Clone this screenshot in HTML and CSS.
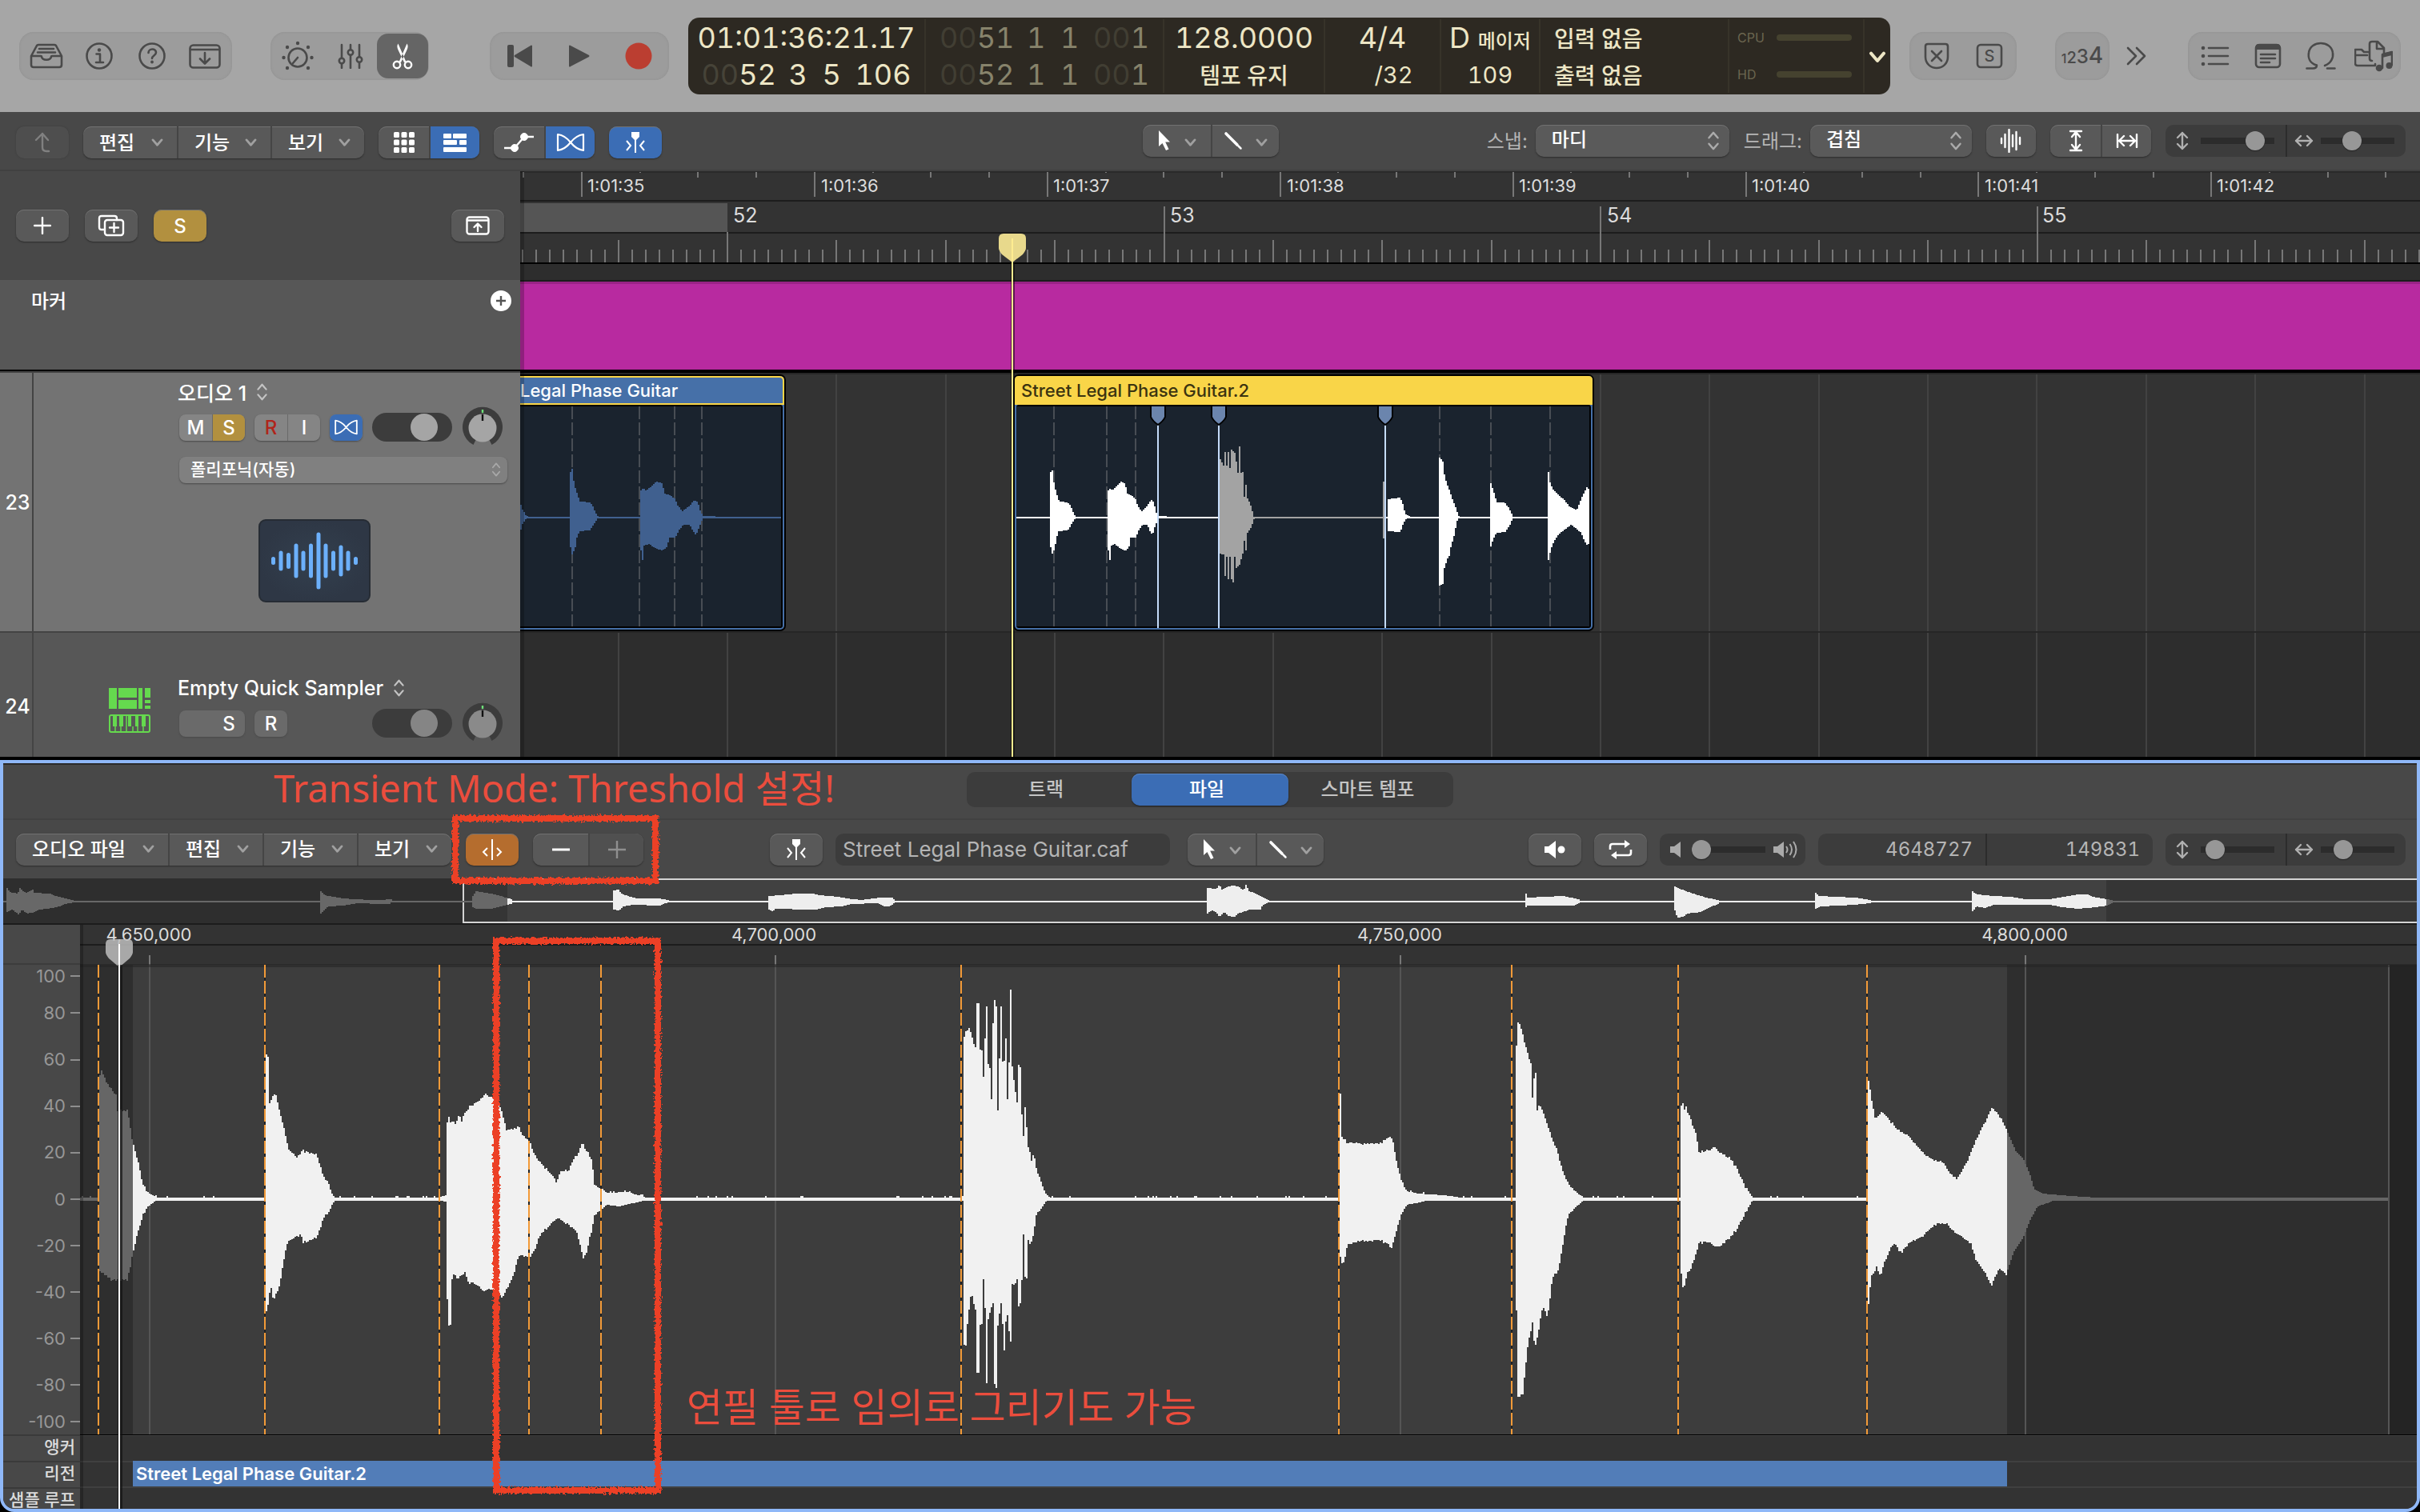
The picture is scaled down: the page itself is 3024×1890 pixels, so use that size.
FILE: index.html
```html
<!DOCTYPE html>
<html lang="ko">
<head>
<meta charset="utf-8">
<title>오디오 편집기</title>
<link rel="stylesheet" href="styles.css">
</head>
<body>
<svg class="defs" width="0" height="0" aria-hidden="true">
  <symbol id="chev" viewBox="0 0 16 12"><path d="M2 2l6 7 6-7" fill="none" stroke="currentColor" stroke-width="3" stroke-linecap="round" stroke-linejoin="round"/></symbol>
  <symbol id="updown" viewBox="0 0 16 26"><path d="M2 9l6-7 6 7M2 17l6 7 6-7" fill="none" stroke="currentColor" stroke-width="2.6" stroke-linecap="round" stroke-linejoin="round"/></symbol>
  <symbol id="pointer" viewBox="0 0 18 28"><path d="M2 1v20l4.500-4 4.500 9 3.500-1.600-4.300-8.900H16z" fill="currentColor"/></symbol>
  <symbol id="pencil" viewBox="0 0 24 24"><path d="M3 3l14 14" stroke="currentColor" stroke-width="3.600" stroke-linecap="round"/><path d="M18.500 18.500l3 3" stroke="currentColor" stroke-width="2.500" stroke-linecap="round"/></symbol>
  <symbol id="flex" viewBox="0 0 36 24"><path d="M2 2c8 1 12 5 16 10s8 9 16 10V2c-8 1-12 5-16 10S10 21 2 22z" fill="none" stroke="currentColor" stroke-width="2.200" stroke-linejoin="round"/></symbol>
  <symbol id="catch" viewBox="0 0 26 28"><path d="M8 1h10v6l-4 4h-2L8 7z" fill="currentColor"/><path d="M13 8v19M2 12l5 6-5 6M24 12l-5 6 5 6" fill="none" stroke="currentColor" stroke-width="2"/></symbol>
  <symbol id="vert" viewBox="0 0 18 24"><path d="M9 2v20M3 8l6-6 6 6M3 16l6 6 6-6" fill="none" stroke="currentColor" stroke-width="2.400" stroke-linecap="round" stroke-linejoin="round"/></symbol>
  <symbol id="horz" viewBox="0 0 24 16"><path d="M2 8h20M8 2L2 8l6 6M16 2l6 6-6 6" fill="none" stroke="currentColor" stroke-width="2.400" stroke-linecap="round" stroke-linejoin="round"/></symbol>
  <symbol id="knob" viewBox="0 0 52 52"><path d="M14.500 48A25 25 0 1 1 37.500 48L34 41H18z" fill="#3c3c3c"/><circle cx="26" cy="27" r="17.500" fill="currentColor"/><path d="M26 4v4" stroke="#6fe07a" stroke-width="2.400"/><path d="M26 10v8" stroke="#111" stroke-width="2.400"/></symbol>
</svg>

<div class="app">
  <header class="topbar">
    <div class="pill">
      <button class="tool" aria-label="라이브러리"><svg width="42" height="32" viewBox="0 0 42 32"><path d="M2 16L9 3q1-1 2-1h20q1 0 2 1l7 13v11q0 3-3 3H5q-3 0-3-3zM2 16h12q1 0 1 1c1 5 11 5 12 0q0-1 1-1h12M12 7h18M10 11.500h22" class="st"/></svg></button>
      <button class="tool" aria-label="정보"><svg width="34" height="34" viewBox="0 0 34 34"><circle cx="17" cy="17" r="15.500" class="st"/><circle cx="17" cy="9.500" r="2.200" class="fl"/><path d="M13.500 14.500H18V25M13 25h9" class="st"/></svg></button>
      <button class="tool" aria-label="도움말"><svg width="34" height="34" viewBox="0 0 34 34"><circle cx="17" cy="17" r="15.500" class="st"/><path d="M12.500 13c0-6 9.500-6 9.500-.500 0 4-5 4-5 7.500" class="st"/><circle cx="17" cy="24.500" r="1.900" class="fl"/></svg></button>
      <button class="tool" aria-label="도구 막대"><svg width="40" height="31" viewBox="0 0 40 31"><rect x="1.500" y="1.500" width="37" height="28" rx="4" class="st"/><path d="M2 7h36M20 11v13M14 18.500l6 6 6-6" class="st"/></svg></button>
    </div>
    <div class="pill pill-b">
      <button class="tool" aria-label="스마트 컨트롤"><svg width="40" height="38" viewBox="0 0 40 38"><circle cx="20" cy="21" r="11.500" class="st"/><path d="M20 21l-6 7" class="st"/><g class="fl"><circle cx="20" cy="3" r="2.200"/><circle cx="7" cy="8" r="2.200"/><circle cx="33" cy="8" r="2.200"/><circle cx="2.500" cy="21" r="2.200"/><circle cx="37.500" cy="21" r="2.200"/><circle cx="7" cy="34" r="2.200"/><circle cx="33" cy="34" r="2.200"/></g></svg></button>
      <button class="tool" aria-label="믹서"><svg width="32" height="32" viewBox="0 0 32 32"><path d="M5 2v17M5 26v5M16 2v6M16 15v16M27 2v15M27 24v7" class="st"/><circle cx="5" cy="22" r="3.200" class="st"/><circle cx="16" cy="11.500" r="3.200" class="st"/><circle cx="27" cy="20.500" r="3.200" class="st"/></svg></button>
      <button class="tool tool-on" aria-label="편집기"><svg width="26" height="34" viewBox="0 0 26 34"><g fill="none" stroke="#fff" stroke-width="2.400"><circle cx="6" cy="28" r="4.200"/><circle cx="20" cy="28" r="4.200"/></g><path d="M8.500 24.500L18.500 1.500c2 3 1 6-.500 9L11 25zM17.500 24.500L7.500 1.500c-2 3-1 6 .500 9L15 25z" fill="#fff"/></svg></button>
    </div>
    <div class="pill pill-c">
      <button class="tool" aria-label="처음으로"><svg width="32" height="28" viewBox="0 0 32 28"><rect x="0" y="0" width="8" height="28" rx="2" class="fl"/><path d="M31 1v26q-1 1-2 0L9 15q-1-1 0-2L29 1q1-1 2 0z" class="fl"/></svg></button>
      <button class="tool" aria-label="재생"><svg width="26" height="28" viewBox="0 0 26 28"><path d="M0 1q1-1 2 0l23 12q1 1 0 2L2 27q-1 1-2 0z" class="fl"/></svg></button>
      <button class="tool" aria-label="녹음"><svg width="34" height="34"><circle cx="17" cy="17" r="16.500" fill="#bb3e31"/></svg></button>
    </div>

    <section class="lcd" aria-label="디스플레이">
      <div class="lcd-cell pos"><b>01:01:36:21.17</b><b class="beats"><span><i>00</i>52</span><span>3</span><span>5</span><span>106</span></b></div>
      <div class="lcd-cell pos dim"><b class="beats"><span><i>00</i>51</span><span>1</span><span>1</span><span><i>00</i>1</span></b><b class="beats"><span><i>00</i>52</span><span>1</span><span>1</span><span><i>00</i>1</span></b></div>
      <div class="lcd-cell"><b>128.0000</b><b class="ko">템포 유지</b></div>
      <div class="lcd-cell"><b>4/4</b><b class="sub div">/32</b></div>
      <div class="lcd-cell"><b>D <small>메이저</small></b><b class="sub">109</b></div>
      <div class="lcd-cell io"><b class="ko">입력 없음</b><b class="ko">출력 없음</b></div>
      <div class="lcd-cell load"><span>CPU<i></i></span><span>HD<i></i></span></div>
      <button class="lcd-more" aria-label="디스플레이 모드"><svg width="22" height="16"><use href="#chev"/></svg></button>
    </section>

    <div class="pill">
      <button class="tool" aria-label="대치"><svg width="32" height="34" viewBox="0 0 32 34"><path d="M5 2h22q3 0 3 3v13c0 9-7 14-14 14S2 27 2 18V5q0-3 3-3zM10 11l12 12M22 11L10 23" class="st"/></svg></button>
      <button class="tool" aria-label="솔로"><svg width="34" height="32" viewBox="0 0 34 32"><rect x="2" y="2" width="30" height="28" rx="4" class="st"/><text x="17" y="23" text-anchor="middle" class="ic-s">S</text></svg></button>
    </div>
    <button class="pill count" aria-label="카운트 인"><span class="c1">1</span><span class="c2">2</span><span class="c3">3</span><span class="c4">4</span></button>
    <button class="more" aria-label="더 보기"><svg width="26" height="24" viewBox="0 0 26 24"><path d="M2 2l10 10L2 22M13 2l10 10-10 10" class="st"/></svg></button>
    <div class="pill">
      <button class="tool" aria-label="목록"><svg width="36" height="26" viewBox="0 0 36 26"><path d="M10 3h24M10 13h24M10 23h24" class="st"/><g class="fl"><circle cx="3" cy="3" r="2.300"/><circle cx="3" cy="13" r="2.300"/><circle cx="3" cy="23" r="2.300"/></g></svg></button>
      <button class="tool" aria-label="메모장"><svg width="34" height="32" viewBox="0 0 34 32"><rect x="2" y="2" width="30" height="28" rx="4" class="st"/><path d="M2 8V4q0-3 3-3h24q3 0 3 3v4z" class="fl"/><path d="M8 14h18M8 19h18M8 24h11" class="st"/></svg></button>
      <button class="tool" aria-label="루프 브라우저"><svg width="38" height="36" viewBox="0 0 38 36"><path d="M1.500 33.500H9q5 0 5-4C5 27 3 20 4 14 6-2 32-2 34 14c1 6-2 13-10 16M27 33.500h9.500" class="st"/></svg></button>
      <button class="tool" aria-label="미디어 브라우저"><svg width="48" height="40" viewBox="0 0 48 40"><path d="M26 30v2H4q-3 0-3-3V12h8l3 3h5M1 19h15M22 26q-3 0-3-3V5q0-3 3-3h7l8 8v6M28 2v9h8" class="st"/><path d="M35 35V18l12-3v16" class="st"/><path d="M35 17l12-3v5l-12 3z" class="fl"/><circle cx="31" cy="35" r="4.300" class="fl"/><circle cx="43.500" cy="32" r="4" class="fl"/></svg></button>
    </div>
  </header>

  <nav class="toolbar main-bar">
    <div class="left">
      <button class="btn faint" aria-label="뒤로"><svg width="24" height="26" viewBox="0 0 24 26"><path d="M12 2v17q0 5 5 5h3M4 10l8-8 7 8" class="ln"/></svg></button>
      <div class="seg menus">
        <button>편집<svg width="15" height="11"><use href="#chev"/></svg></button><button>기능<svg width="15" height="11"><use href="#chev"/></svg></button><button>보기<svg width="15" height="11"><use href="#chev"/></svg></button>
      </div>
      <div class="seg">
        <button aria-label="격자"><svg width="26" height="26" viewBox="0 0 26 26" fill="#fff"><rect width="7" height="7" rx="1.500"/><rect x="9.500" width="7" height="7" rx="1.500"/><rect x="19" width="7" height="7" rx="1.500"/><rect y="9.500" width="7" height="7" rx="1.500"/><rect x="9.500" y="9.500" width="7" height="7" rx="1.500"/><rect x="19" y="9.500" width="7" height="7" rx="1.500"/><rect y="19" width="7" height="7" rx="1.500"/><rect x="9.500" y="19" width="7" height="7" rx="1.500"/><rect x="19" y="19" width="7" height="7" rx="1.500"/></svg></button><button class="blue" aria-label="트랙 보기"><svg width="30" height="24" viewBox="0 0 30 24" fill="#fff"><rect y="1" width="10" height="6" rx="1"/><rect x="12" y="1" width="17" height="6" rx="1"/><rect y="9" width="17" height="6" rx="1"/><rect x="20" y="9" width="9" height="6" rx="1"/><rect y="18" width="29" height="6" rx="1"/></svg></button>
      </div>
      <div class="seg">
        <button aria-label="오토메이션"><svg width="38" height="26" viewBox="0 0 38 26" fill="#fff" stroke="#fff"><circle cx="13" cy="20" r="4.500"/><circle cx="25" cy="6" r="4.500"/><path d="M0 20h10M13 20L25 6h12" stroke-width="2.400" fill="none"/></svg></button><button class="blue" aria-label="Flex"><svg width="36" height="24"><use href="#flex"/></svg></button>
      </div>
      <button class="btn blue" aria-label="따라가기"><svg width="26" height="28"><use href="#catch"/></svg></button>
    </div>
    <div class="seg tools">
      <button aria-label="포인터 도구"><svg width="18" height="28"><use href="#pointer"/></svg><svg class="cv" width="15" height="11"><use href="#chev"/></svg></button><button aria-label="연필 도구"><svg width="24" height="24"><use href="#pencil"/></svg><svg class="cv" width="15" height="11"><use href="#chev"/></svg></button>
    </div>
    <div class="right">
      <label for="snap">스냅:</label>
      <div class="pick snap"><select id="snap"><option>마디</option></select><svg width="16" height="24"><use href="#updown"/></svg></div>
      <label for="drag">드래그:</label>
      <div class="pick drag"><select id="drag"><option>겹침</option></select><svg width="16" height="24"><use href="#updown"/></svg></div>
      <button class="btn wavebtn" aria-label="파형 확대"><svg width="28" height="30" viewBox="0 0 28 30"><path d="M2 12v6M6.500 7v16M11.500 1v28M16 8v14M20.500 4v22M25 11v8" class="ln"/></svg></button>
      <div class="seg"><button aria-label="세로 맞춤"><svg width="18" height="28" viewBox="0 0 18 28"><path d="M2 2h14M2 26h14M9 4v20M4 9l5-6 5 6M4 19l5 6 5-6" class="ln"/></svg></button><button aria-label="가로 맞춤"><svg width="28" height="18" viewBox="0 0 28 18"><path d="M2 1v16M26 1v16M4 9h20M10 3L4 9l6 6M18 3l6 6-6 6" class="ln"/></svg></button></div>
      <div class="zoom"><label><svg width="18" height="24"><use href="#vert"/></svg><input type="range" aria-label="세로 확대" value="82"></label><label><svg width="24" height="16"><use href="#horz"/></svg><input type="range" aria-label="가로 확대" value="40"></label></div>
    </div>
  </nav>

  <main class="arrange">
    <section class="heads">
      <div class="head-tools">
        <button class="btn" aria-label="트랙 추가"><svg width="22" height="22" viewBox="0 0 22 22"><path d="M11 1v20M1 11h20" class="ln"/></svg></button>
        <button class="btn" aria-label="트랙 복제"><svg width="34" height="28" viewBox="0 0 34 28"><path d="M8 19H5q-3 0-3-3V5q0-3 3-3h16q3 0 3 3v2" class="ln"/><rect x="9" y="7" width="23" height="19" rx="3" class="ln"/><path d="M20.500 11v11M15 16.500h11" class="ln"/></svg></button>
        <button class="btn gold">S</button>
        <button class="btn last" aria-label="헤더 설정"><svg width="30" height="24" viewBox="0 0 30 24"><rect x="1.500" y="1.500" width="27" height="21" rx="3" class="ln"/><path d="M2 5.500h26M15 10v9M10.500 14l4.500-4.500 4.500 4.500" class="ln"/></svg></button>
      </div>
      <div class="marker-head"><span>마커</span><button class="plus" aria-label="마커 추가"><svg width="26" height="26"><circle cx="13" cy="13" r="13" fill="#fff"/><path d="M13 7v12M7 13h12" stroke="#555" stroke-width="2.400"/></svg></button></div>
      <article class="track track-a">
        <div class="num">23</div>
        <div class="strip">
          <h2>오디오 1<svg width="15" height="22"><use href="#updown"/></svg></h2>
          <div class="ctl">
            <div class="mini"><button>M</button><button class="gold">S</button></div>
            <div class="mini"><button class="rec">R</button><button>I</button></div>
            <div class="mini"><button class="blue" aria-label="Flex"><svg width="31" height="20"><use href="#flex"/></svg></button></div>
            <input class="vol" type="range" aria-label="볼륨" value="73">
            <svg class="pan" width="52" height="52"><use href="#knob"/></svg>
          </div>
          <div class="pick algo"><select aria-label="Flex 모드"><option>폴리포닉(자동)</option></select><svg width="12" height="18"><use href="#updown"/></svg></div>
          <svg class="thumb" width="140" height="104" viewBox="0 0 140 104"><defs><radialGradient id="tg"><stop offset="0" stop-color="#33404f"/><stop offset="1" stop-color="#2e3745"/></radialGradient></defs><rect x="1" y="1" width="138" height="102" rx="8" fill="url(#tg)" stroke="#262c34" stroke-width="2"/><path d="M18.500 49.500v5M28 42v20M37.500 44.500v15M47 33v38M56 42v20M65.500 33v38M75 19v66M84 33v38M93.500 42v20M103 35v34M112 42v20M121.500 49.500v5" stroke="#6cb0fb" stroke-width="5" stroke-linecap="round"/></svg>
        </div>
      </article>
      <article class="track track-b">
        <div class="num">24</div>
        <svg class="sampler" width="52" height="56" viewBox="0 0 52 56" fill="#65d94e"><rect width="10" height="26"/><rect x="12" width="23" height="12"/><rect x="12" y="15" width="23" height="11"/><rect x="37" width="5" height="26"/><rect x="45" width="7" height="12"/><rect x="45" y="15" width="7" height="4"/><rect x="45" y="22" width="7" height="4"/><rect x="1" y="34" width="50" height="21" rx="2" fill="none" stroke="#65d94e" stroke-width="2"/><path d="M5 34h5v14H5zM13 34h5v14h-5zM24 34h4v14h-4zM33 34h4v14h-4zM41 34h5v14h-5z"/><path d="M8 48v7M15 48v7M22 34v21M30 48v7M36 48v7M43 48v7" stroke="#65d94e" stroke-width="1.500"/></svg>
        <div class="strip">
          <h2>Empty Quick Sampler<svg width="15" height="22"><use href="#updown"/></svg></h2>
          <div class="ctl">
            <div class="mini"><button aria-label="음소거"></button><button>S</button></div>
            <div class="mini"><button>R</button></div>
            <input class="vol" type="range" aria-label="볼륨" value="73">
            <svg class="pan" width="52" height="52"><use href="#knob"/></svg>
          </div>
        </div>
      </article>
    </section>

    <svg class="timeline" role="img" aria-label="타임라인">
      <g transform="translate(-650 -214)">
        <rect x="650" y="214" width="4000" height="116" fill="#333"/>
        <rect x="650" y="254" width="259" height="36" fill="#555"/>
        <rect x="650" y="214" width="4000" height="2" fill="#2a2a2a"/>
        <rect x="650" y="250" width="4000" height="2" fill="#1c1c1c"/>
        <rect x="650" y="290" width="4000" height="2" fill="#1c1c1c"/>
        <rect x="650" y="328" width="4000" height="2" fill="#000"/>
        <rect x="650" y="330" width="4000" height="20" fill="#2d2d2d"/>
        <g id="ruler" stroke="#777" stroke-width="2" shape-rendering="crispEdges"></g>
        <g class="rl"><text x="734" y="240">1:01:35</text><text x="1026" y="240">1:01:36</text><text x="1316" y="240">1:01:37</text><text x="1608" y="240">1:01:38</text><text x="1898" y="240">1:01:39</text><text x="2189" y="240">1:01:40</text><text x="2480" y="240">1:01:41</text><text x="2770" y="240">1:01:42</text></g>
        <g class="rb"><text x="916" y="278">52</text><text x="1462" y="278">53</text><text x="2008" y="278">54</text><text x="2552" y="278">55</text></g>
        <rect x="650" y="350" width="4000" height="2" fill="#1c1c1c"/>
        <rect x="650" y="352" width="4000" height="110" fill="#b82aa0"/>
        <rect x="650" y="352" width="4000" height="3" fill="#9a2386"/>
        <rect x="650" y="462" width="4000" height="4" fill="#000"/>
        <rect x="650" y="466" width="4000" height="324" fill="#333"/>
        <rect x="650" y="790" width="4000" height="156" fill="#2d2d2d"/>
        <g id="grid" stroke="#424242" stroke-width="2" shape-rendering="crispEdges"></g>
        <rect x="650" y="466" width="4000" height="2" fill="#262626"/>
        <rect x="650" y="789" width="4000" height="2" fill="#262626"/>

        <rect x="600" y="468" width="382" height="321" rx="7" fill="#000"/>
        <rect x="600" y="470" width="380" height="317" rx="5" fill="#4670a8"/>
        <rect x="600" y="506" width="378" height="279" rx="3" fill="#000"/>
        <rect x="600" y="508" width="376" height="275" fill="#1a232e"/>
        <path d="M640 471h334q5 0 5 5v29H640" fill="#4670a8" stroke="#f9d548" stroke-width="2"/>
        <text class="rn" x="650" y="496" fill="#fff">Legal Phase Guitar</text>
        <path class="cut" d="M715 508v275M799 508v275M843 508v275M877 508v275"/>
        <path id="wave-a" fill="#40608f"/>

        <rect x="1266" y="468" width="726" height="321" rx="7" fill="#000"/>
        <rect x="1268" y="470" width="722" height="317" rx="5" fill="#4670a8"/>
        <rect x="1270" y="506" width="718" height="279" rx="3" fill="#000"/>
        <rect x="1270" y="508" width="716" height="275" fill="#1a232e"/>
        <path d="M1268 506v-31q0-5 5-5h712q5 0 5 5v31z" fill="#f9d548"/>
        <text class="rn" x="1276" y="496" fill="#3b3310">Street Legal Phase Guitar.2</text>
        <path class="cut" d="M1317 508v275M1383 508v275M1419 508v275M1799 508v275M1863 508v275M1937 508v275"/>
        <path id="wave-b" fill="#fff"/>
        <path id="wave-m" fill="#a3a3a3"/>
        <path d="M1447 528v257M1523 528v257M1731 528v257" stroke="#c5dcfa" stroke-width="2"/>
        <g fill="#6b85ad" stroke="#000" stroke-width="2"><path d="M1438 507h18v14q-2 5-9 10-7-5-9-10z"/><path d="M1514 507h18v14q-2 5-9 10-7-5-9-10z"/><path d="M1722 507h18v14q-2 5-9 10-7-5-9-10z"/></g>

        <rect x="1263" y="320" width="5" height="626" fill="#000" opacity=".5"/>
        <path d="M1248 298q0-6 6-6h22q6 0 6 6v12q0 3-4 8l-13 10-13-10q-4-5-4-8z" fill="#e8d98c"/>
        <rect x="1264" y="298" width="2" height="648" fill="#ffec90"/>
        <rect x="650" y="214" width="5" height="732" fill="#000" opacity=".22"/>
      </g>
    </svg>
  </main>

  <section class="editor">
    <div class="tabs-row">
      <div class="tabs" role="tablist"><button role="tab">트랙</button><button role="tab" class="blue" aria-selected="true">파일</button><button role="tab">스마트 템포</button></div>
    </div>
    <nav class="toolbar ed-bar">
      <div class="seg menus">
        <button class="wide">오디오 파일<svg width="15" height="11"><use href="#chev"/></svg></button><button>편집<svg width="15" height="11"><use href="#chev"/></svg></button><button>기능<svg width="15" height="11"><use href="#chev"/></svg></button><button>보기<svg width="15" height="11"><use href="#chev"/></svg></button>
      </div>
      <button class="btn orange" aria-label="트랜지언트 편집 모드"><svg width="26" height="28" viewBox="0 0 26 28"><path d="M13 1v26M7 12l-5 5 5 5M19 12l5 5-5 5" fill="none" stroke="#fff" stroke-width="2"/></svg></button>
      <div class="seg step"><button aria-label="트랜지언트 줄이기"><svg width="22" height="22"><path d="M0 11h22" stroke="#fff" stroke-width="3"/></svg></button><button class="off" aria-label="트랜지언트 늘리기"><svg width="22" height="22"><path d="M0 11h22M11 0v22" stroke="#8f8f8f" stroke-width="2.400"/></svg></button></div>
      <button class="btn flexbtn" aria-label="따라가기"><svg width="26" height="28"><use href="#catch"/></svg></button>
      <input class="field file" type="text" aria-label="파일 이름" value="Street Legal Phase Guitar.caf" readonly>
      <div class="seg tools2">
        <button aria-label="포인터 도구"><svg width="18" height="28"><use href="#pointer"/></svg><svg class="cv" width="15" height="11"><use href="#chev"/></svg></button><button aria-label="연필 도구"><svg width="24" height="24"><use href="#pencil"/></svg><svg class="cv" width="15" height="11"><use href="#chev"/></svg></button>
      </div>
      <div class="right">
        <button class="btn" aria-label="미리 듣기"><svg width="28" height="24" viewBox="0 0 28 24" fill="#fff"><path d="M1 8h5l9-7v22l-9-7H1z"/><circle cx="22" cy="12" r="4.500"/></svg></button>
        <button class="btn" aria-label="순환"><svg width="30" height="24" viewBox="0 0 30 24"><path d="M2 12V8q0-3 3-3h17M28 12v4q0 3-3 3H8" fill="none" stroke="#fff" stroke-width="2.600"/><path d="M20 0l7 5-7 5zM10 14l-7 5 7 5z" fill="#fff"/></svg></button>
        <div class="zoom volume"><svg width="16" height="20" viewBox="0 0 16 20" fill="#aaa"><path d="M0 6h5l8-6v20l-8-6H0z"/></svg><input type="range" aria-label="미리 듣기 음량" value="0"><svg width="32" height="22" viewBox="0 0 32 22"><path d="M0 7h5l8-6v20l-8-6H0z" fill="#aaa"/><path d="M16 7q3 4 0 8M20.500 4q5 7 0 14M25 1q7 10 0 20" fill="none" stroke="#aaa" stroke-width="2"/></svg></div>
        <div class="nums"><input type="text" aria-label="시작 위치" value="4648727"><input type="text" aria-label="길이" value="149831"></div>
        <div class="zoom"><label><svg width="18" height="24"><use href="#vert"/></svg><input type="range" aria-label="세로 확대" value="9"></label><label><svg width="24" height="16"><use href="#horz"/></svg><input type="range" aria-label="가로 확대" value="23"></label></div>
      </div>
    </nav>
    <svg class="overview" role="img" aria-label="파일 개요">
      <g transform="translate(-4 -1098)">
        <rect x="4" y="1098" width="4000" height="56" fill="#2e2e2e"/>
        <rect x="578" y="1098" width="4000" height="56" fill="#353535"/>
        <rect x="634" y="1098" width="1998" height="56" fill="#414141"/>
        <rect x="579" y="1099" width="4000" height="54" fill="none" stroke="#d4d4d4" stroke-width="2"/>
        <path id="ov-g" fill="#686868"/><path id="ov-w" fill="#eee"/>
      </g>
    </svg>
    <div class="wave-area">
      <div class="axis">
        <div class="axis-top"></div>
        <svg class="scale" width="96" height="587"><g transform="translate(-4 -1206)"><path d="M88 1220h12M88 1266h12M88 1325h12M88 1383h12M88 1441h12M88 1499h12M88 1557h12M88 1615h12M88 1673h12M88 1731h12M88 1777h12" stroke="#8e8e8e" stroke-width="2"/><g class="ax"><text x="82" y="1228">100</text><text x="82" y="1274">80</text><text x="82" y="1332">60</text><text x="82" y="1390">40</text><text x="82" y="1448">20</text><text x="82" y="1507">0</text><text x="82" y="1565">-20</text><text x="82" y="1623">-40</text><text x="82" y="1681">-60</text><text x="82" y="1739">-80</text><text x="82" y="1785">-100</text></g></g></svg>
        <div class="lane">앵커</div><div class="lane">리전</div><div class="lane">샘플 루프</div>
      </div>
      <svg class="wave" role="img" aria-label="파형">
        <g transform="translate(-100 -1156)">
          <rect x="100" y="1156" width="4000" height="734" fill="#333"/>
          <rect x="100" y="1180" width="4000" height="2" fill="#1c1c1c"/>
          <rect x="100" y="1206" width="4000" height="587" fill="#242424"/>
          <rect x="100" y="1206" width="2884" height="587" fill="#2e2e2e"/>
          <rect x="166" y="1206" width="2342" height="587" fill="#3d3d3d"/>
          <path d="M187 1206v587M969 1206v587M1750 1206v587M2531 1206v587M2985 1206v587" stroke="#555" stroke-width="2"/>
          <path d="M187 1194v12M969 1194v12M1750 1194v12M2531 1194v12" stroke="#777" stroke-width="2"/>
          <rect x="100" y="1205" width="4000" height="4" fill="#222" opacity=".5"/>
          <g class="rl mid"><text x="186" y="1176">4,650,000</text><text x="967" y="1176">4,700,000</text><text x="1749" y="1176">4,750,000</text><text x="2530" y="1176">4,800,000</text></g>
          <path id="ed-g" fill="#666"/><path id="ed-w" fill="#f1f1f1"/>
          <path d="M123 1206v587M331 1206v587M549 1206v587M661 1206v587M751 1206v587M1201 1206v587M1673 1206v587M1889 1206v587M2097 1206v587M2333 1206v587" stroke="#222" stroke-width="2"/>
          <path d="M123 1206v587M331 1206v587M549 1206v587M661 1206v587M751 1206v587M1201 1206v587M1673 1206v587M1889 1206v587M2097 1206v587M2333 1206v587" stroke="#f29a38" stroke-width="2" stroke-dasharray="16 4"/>
          <rect x="100" y="1793" width="4000" height="1" fill="#000"/><rect x="100" y="1794" width="4000" height="1" fill="#404040"/>
          <path d="M100 1827h4000M100 1859h4000" stroke="#404040" stroke-width="2"/>
          <rect x="166" y="1826" width="2342" height="32" fill="#527db8"/>
          <text class="rn bold" x="170" y="1850" fill="#fff">Street Legal Phase Guitar.2</text>
          <path d="M132 1180q0-6 6-6h22q6 0 6 6v10q0 3-4 8l-13 11-13-11q-4-5-4-8z" fill="#bdbdbd" opacity=".85"/>
          <rect x="147" y="1206" width="6" height="684" fill="#111" opacity=".7"/>
          <rect x="148" y="1180" width="2" height="710" fill="#fff"/>
          <rect x="100" y="1156" width="4" height="734" fill="#000" opacity=".25"/>
        </g>
      </svg>
    </div>
    <p class="note note-a">Transient Mode: Threshold 설정!</p>
    <p class="note note-b">연필 툴로 임의로 그리기도 가능</p>
    <svg class="marks" width="300" height="880" aria-hidden="true">
      <defs><filter id="rough" x="-5%" y="-5%" width="110%" height="110%"><feTurbulence type="fractalNoise" baseFrequency=".35" numOctaves="2" result="n"/><feDisplacementMap in="SourceGraphic" in2="n" scale="7"/></filter></defs>
      <g fill="none" stroke="#ec3f27" stroke-width="8" filter="url(#rough)" transform="translate(-562 -1011)"><rect x="571" y="1024" width="250" height="78"/><rect x="622" y="1177" width="202" height="687"/></g>
    </svg>
  </section>
</div>
<script src="waves.js"></script>
</body>
</html>
```
FILE: styles.css
```css
* { box-sizing: border-box; }
body {
  margin: 0;
  background: #000;
  color: #fff;
  font-family: Inter, "Noto Sans CJK KR", sans-serif;
  font-size: 24px;
}
button, input, select { font: inherit; color: inherit; margin: 0; border: 0; padding: 0; background: none; }
svg { display: block; flex: none; }
.defs { position: absolute; }
.app { display: flex; flex-direction: column; min-height: 100vh; overflow: hidden; }

.topbar {
  display: flex;
  align-items: center;
  height: 140px;
  padding: 0 24px;
  background: #a6a6a6;
  color: #4a4a4a;
}
.st { fill: none; stroke: currentColor; stroke-width: 2.6; stroke-linecap: round; stroke-linejoin: round; }
.fl { fill: currentColor; }
.ln { fill: none; stroke: currentColor; stroke-width: 2.4; stroke-linecap: round; stroke-linejoin: round; }
.ic-s { font-size: 20px; font-weight: 500; fill: currentColor; }
.pill {
  display: flex;
  align-items: center;
  height: 60px;
  padding: 0 1px;
  border-radius: 18px;
  background: #9c9c9c;
  box-shadow: inset 0 0 3px #8e8e8e;
}
.tool { display: flex; align-items: center; justify-content: center; width: 66px; height: 56px; }
.tool-on { width: 64px; border-radius: 14px; background: #656565; }
.pill-b { margin-left: 48px; }
.pill-c { margin-left: 76px; }
.pill-c .tool { width: 74px; }
.count { margin-left: 48px; width: 68px; justify-content: center; align-items: baseline; line-height: 58px; font-weight: 500; }
.c1 { font-size: 16px; }
.c2 { font-size: 20px; }
.c3 { font-size: 24px; }
.c4 { font-size: 28px; }
.more { width: 98px; padding-left: 21px; }

.lcd {
  flex: 1;
  display: grid;
  grid-template-columns: 297fr 298fr 201fr 145fr 124fr 236fr 169fr 32fr;
  height: 96px;
  margin: 0 24px;
  padding: 2px 0;
  border-radius: 14px;
  background: #2d2922;
  color: #ede6c5;
}
.lcd-cell { display: grid; grid-template-rows: 46px 46px; justify-items: center; align-items: center; white-space: nowrap; border-right: 2px solid #373329; }
.lcd b { font-weight: 400; font-size: 36px; font-variant-numeric: tabular-nums; }
.lcd .ko { font-size: 28px; font-weight: 500; }
.lcd .sub { font-size: 29px; }
.lcd .div { padding-left: 28px; }
.lcd small { font-size: 24px; font-weight: 500; }
.lcd i { font-style: normal; color: #464338; }
.beats { display: grid; grid-template-columns: 103px 42px 43px 74px; width: 262px; }
.beats span:last-child { text-align: right; }
.beats span:nth-child(2), .beats span:nth-child(3) { padding-left: 6px; }
.lcd .dim { color: #87836b; }
.lcd .dim i { color: #413e33; }
.lcd .io { justify-items: start; padding-left: 17px; }
.load { color: #6b6650; font-size: 16px; justify-items: stretch; padding: 0 14px 0 10px; }
.load span { display: flex; justify-content: space-between; align-items: center; }
.load i { width: 94px; height: 8px; border-radius: 4px; background: #45422f; }
.lcd-more { display: flex; align-items: center; justify-content: center; padding-top: 4px; }

.toolbar {
  display: flex;
  align-items: center;
  gap: 18px;
  height: 74px;
  padding: 0 18px 0 20px;
  background: #484848;
  border-bottom: 2px solid #414141;
}
.main-bar { display: grid; grid-template-columns: 1fr auto 1fr; }
.left { display: flex; align-items: center; gap: 18px; padding-top: 4px; }
.btn, .seg {
  display: flex;
  height: 40px;
  border-radius: 10px;
  background: #595959;
  box-shadow: inset 0 1px 0 #727272, 0 1px 2px #2c2c2c;
}
.btn { align-items: center; justify-content: center; width: 66px; flex: none; font-weight: 500; }
.seg { overflow: hidden; flex: none; }
.seg button { display: flex; align-items: center; justify-content: center; width: 63px; font-weight: 500; }
.seg button + button { border-left: 2px solid #454545; }
.seg .blue, .blue { background: #3b6db5; }
.gold { background: #b2903f; }
.orange { background: #b56d2e; }
.faint { background: #4e4e4e; color: #808080; box-shadow: 0 0 2px #3a3a3a; }
.menus button { width: 117px; justify-content: space-between; padding: 0 17px 4px 20px; white-space: nowrap; }
.ed-bar .menus button { width: 118px; }
.menus svg, .cv { color: #a0a0a0; margin-top: 4px; }
.ed-bar .menus .wide { width: 190px; }
.tools button, .tools2 button { width: 85px; gap: 16px; }
.right { display: flex; align-items: center; justify-content: flex-end; gap: 18px; }
.right > label { color: #b5b5b5; padding-bottom: 4px; margin-right: -8px; }
.pick { position: relative; height: 40px; border-radius: 10px; background: #5a5a5a; box-shadow: inset 0 1px 0 #727272, 0 1px 2px #2c2c2c; }
.pick select { appearance: none; width: 100%; height: 100%; padding: 0 20px 4px; font-weight: 500; }
.pick svg { position: absolute; right: 12px; top: 8px; color: #ababab; pointer-events: none; }
.snap { width: 242px; }
.drag { width: 202px; }
.wavebtn { width: 62px; }
.zoom { display: flex; height: 40px; width: 300px; border-radius: 10px; background: #3c3c3c; color: #b0b0b0; }
.zoom label { display: flex; align-items: center; justify-content: space-between; width: 150px; padding: 0 14px 0 12px; }
.zoom label + label { border-left: 2px solid #2c2c2c; padding-left: 9px; }
input[type="range"] { appearance: none; width: 92px; height: 24px; background: linear-gradient(#2c2c2c, #2c2c2c) center / 100% 8px no-repeat; border-radius: 4px; }
input[type="range"]::-webkit-slider-thumb { appearance: none; width: 24px; height: 24px; border-radius: 50%; background: #979797; box-shadow: 0 1px 1px #222; }

.arrange { display: grid; grid-template-columns: 650px 1fr; border-bottom: 4px solid #000; }
.heads { background: #484848; }
.head-tools { display: flex; align-items: center; gap: 20px; height: 136px; padding: 0 20px; }
.head-tools .last { margin-left: auto; }
.marker-head { display: flex; justify-content: space-between; align-items: flex-start; height: 114px; padding: 7px 11px 0 39px; background: #575757; border-bottom: 2px solid #000; font-weight: 500; }
.plus { margin-top: 6px; }
.track { display: grid; grid-template-columns: 42px 1fr; }
.track-a { height: 327px; background: #737373; border-top: 2px solid #444; border-bottom: 2px solid #444; }
.track-b { height: 155px; background: #575757; grid-template-columns: 42px 146px 36px 1fr; }
.num { display: flex; align-items: center; justify-content: center; border-right: 2px solid #444; font-size: 25px; font-weight: 500; padding-left: 4px; }
.track-b .num { padding-top: 28px; }
.strip { padding: 6px 16px 0 182px; }
.track-b .sampler { grid-column: 2; justify-self: end; margin-top: 69px; }
.track-b .strip { grid-column: 4; padding-left: 0; padding-top: 51px; }
.track h2 { display: flex; align-items: center; gap: 12px; margin: 0 0 0 -2px; height: 36px; font-size: 25px; font-weight: 500; white-space: nowrap; }
.track h2 svg { color: #c4c4c4; }
.ctl { display: flex; align-items: center; gap: 12px; height: 52px; }
.mini { display: flex; height: 33px; border-radius: 8px; overflow: hidden; background: #858585; box-shadow: 0 1px 2px #4a4a4a; font-weight: 500; }
.track-b .mini { background: #6a6a6a; }
.mini button { display: flex; align-items: center; justify-content: center; width: 41px; }
.mini button + button { border-left: 1px solid #6a6a6a; }
.mini .rec { color: #b0251b; }
.ctl .vol { width: 100px; height: 36px; border-radius: 18px; background: #3c3c3c; margin-left: auto; }
.ctl .vol::-webkit-slider-thumb { width: 34px; height: 34px; background: #a5a5a5; box-shadow: none; }
.track-b .vol::-webkit-slider-thumb { background: #858585; }
.pan { color: #a5a5a5; margin: 0 5px 0 0; }
.track-b .pan { color: #8a8a8a; }
.algo { height: 33px; width: 410px; margin-top: 11px; background: #808080; box-shadow: 0 1px 2px #4a4a4a; border-radius: 8px; font-size: 21px; }
.algo select { padding: 0 14px 3px; }
.algo svg { top: 7px; right: 8px; color: #a8a8a8; }
.thumb { margin: 45px 0 0 99px; }
.timeline { width: 100%; height: 732px; overflow: hidden; }
.rl { font-size: 22px; fill: #dcdcdc; }
.rb { font-size: 25px; fill: #dcdcdc; }
.mid { text-anchor: middle; }
.rn { font-size: 22px; font-weight: 500; }
.bold { font-weight: 600; }
.cut { stroke: #484d54; stroke-width: 2; stroke-dasharray: 16 4; }

.editor { position: relative; flex: 1; display: flex; flex-direction: column; border: 4px solid #8fb8f8; border-radius: 0 0 18px 18px; overflow: hidden; background: #333; }
.tabs-row { display: flex; justify-content: center; align-items: center; height: 71px; padding-bottom: 6px; background: #484848; border-top: 2px solid #2b2b2b; border-bottom: 2px solid #414141; }
.tabs { display: flex; align-items: center; height: 44px; border-radius: 10px; background: #3c3c3c; color: #c4c4c4; font-weight: 500; }
.tabs button { width: 206px; height: 40px; padding: 0 8px 8px 0; border-radius: 10px; }
.tabs .blue { width: 196px; color: #fff; box-shadow: inset 0 1px 0 #5b87c6, 0 1px 2px #222; }
.ed-bar { height: 73px; padding: 0 14px 0 16px; border-bottom: 0; }
.step button { width: 69px; }
.step .off { background: #505050; }
.flexbtn { margin-left: 140px; }
.field { height: 40px; border-radius: 10px; background: #3c3c3c; color: #b5b5b5; font-size: 26px; }
.file { width: 418px; padding: 0 9px; margin-left: -2px; }
.ed-bar .tools2 { margin: 0 auto 0 4px; }
.ed-bar .right { gap: 16px; }
.volume { width: 182px; align-items: center; justify-content: space-between; padding: 0 8px 0 13px; }
.nums { display: flex; height: 40px; width: 418px; border-radius: 10px; background: #3c3c3c; color: #b5b5b5; font-size: 24px; font-variant-numeric: tabular-nums; }
.nums input { width: 209px; padding-right: 16px; text-align: right; }
.nums input + input { border-left: 2px solid #2c2c2c; }
.overview { width: 100%; height: 56px; }
.wave-area { display: grid; grid-template-columns: 96px 1fr; flex: 1; border-top: 2px solid #1c1c1c; }
.axis { background: #484848; }
.axis-top { height: 50px; border-bottom: 2px solid #3c3c3c; }
.ax { font-size: 22px; fill: #979797; text-anchor: end; }
.lane { height: 33px; line-height: 28px; padding-right: 6px; text-align: right; font-size: 21px; font-weight: 500; color: #dcdcdc; border-top: 2px solid #3a3a3a; white-space: nowrap; }
.lane:last-child { height: 27px; }
.wave { width: 100%; height: 100%; min-height: 730px; }
.note { position: absolute; margin: 0; color: #eb4d3d; font-family: "Noto Sans", "Noto Sans CJK KR", sans-serif; line-height: 60px; white-space: nowrap; }
.note-a { left: 338px; top: 1px; font-size: 47px; }
.note-b { left: 854px; top: 774px; font-size: 49px; }
.marks { position: absolute; left: 556px; top: 56px; pointer-events: none; }
```
FILE: waves.js
```js
// Each outline is a flat list: x, height, x, height, ...
function heightAt(list, x) {
  if (x < list[0] || x > list[list.length - 2]) return 0;
  for (let i = 2; i < list.length; i += 2) {
    if (x <= list[i]) {
      const t = (x - list[i - 2]) / (list[i] - list[i - 2] || 1);
      return list[i - 1] + (list[i + 1] - list[i - 1]) * t;
    }
  }
  return 0;
}
function outline(from, to, mid, base, hits, jitter) {
  let d = '';
  for (let x = from; x < to; x += 2) {
    let up = base, down = base;
    for (const [u, l] of hits) {
      up = Math.max(up, heightAt(u, x));
      down = Math.max(down, heightAt(l, x));
    }
    if (jitter) {
      const n = Math.abs(Math.sin(x * 12.9898) * 43758.5453) % 1;
      if (up > 12) up += (n - 0.5) * 3;
      else if (n > 0.9) up += 2;
      if (down > 12) down += (n - 0.5) * 3;
    }
    up = Math.round(up); down = Math.round(down);
    d += `M${x} ${mid - up}h2v${up + down}h-2z`;
  }
  return d;
}
function draw(id, ...parts) {
  document.getElementById(id).setAttribute('d', parts.join(''));
}
const fit = (list, from, to, k) => list.map((v, i) => i % 2 ? v : to + (v - from) * k);

const editor = [
  [[124,156,126,162,132,147,138,138,144,130,146,111,159,111,163,80,166,67,172,47,176,24,182,10,188,6,196,2],
   [124,91,132,96,138,101,158,101,161,89,165,67,171,44,177,21,183,10,192,3]],
  [[332,180,334,177,336,119,341,133,344,130,349,108,355,85,360,62,369,54,371,52,377,62,381,59,389,57,395,56,399,42,403,29,409,21,414,7,417,3],
   [332,139,335,128,337,105,341,130,343,119,347,114,350,100,352,87,355,69,359,53,369,48,375,44,378,54,388,51,395,48,399,37,403,24,410,16,414,7,417,2]],
  [[550,3,556,5,558,96,561,108,562,96,568,95,573,106,576,97,580,108,587,117,595,120,601,126,606,132,612,127,615,129,623,119,628,101,632,87,644,88,647,92,653,78,661,72,666,58,675,44,683,37,690,29,694,22,699,33,710,37,715,49,722,58,727,70,731,61,735,56,739,49,742,17,750,14,757,8,784,9,793,6,804,3],
   [550,2,556,3,558,125,560,159,562,157,563,107,565,91,570,100,580,91,584,104,595,106,603,115,612,112,620,119,627,122,634,110,641,94,647,71,662,71,668,62,675,42,683,37,691,27,699,24,710,33,719,39,725,60,728,73,732,67,735,51,739,39,742,19,750,14,757,7,773,9,790,5,804,2]],
  [[1204,204,1206,210,1211,214,1217,189,1219,188,1220,246,1222,246,1223,187,1227,187,1229,119,1230,200,1232,241,1234,169,1236,165,1238,126,1240,220,1242,248,1244,240,1246,110,1248,176,1250,241,1252,173,1254,173,1256,200,1258,126,1260,170,1262,262,1264,167,1267,140,1270,121,1272,169,1275,165,1277,47,1279,110,1281,121,1283,60,1285,69,1287,47,1291,58,1294,38,1300,22,1305,8,1310,3],
   [1204,183,1206,183,1209,144,1213,116,1217,135,1219,138,1220,218,1222,218,1224,157,1226,157,1228,100,1230,135,1232,230,1234,150,1237,139,1240,130,1242,230,1244,235,1246,157,1250,130,1252,157,1254,189,1257,134,1259,157,1262,178,1264,107,1267,107,1270,100,1272,135,1275,130,1278,44,1281,123,1284,50,1287,58,1291,42,1294,19,1300,12,1306,3]],
  [[1672,133,1675,133,1676,78,1681,72,1707,69,1725,70,1734,78,1739,75,1744,47,1750,24,1757,10,1772,7,1802,5,1820,3],
   [1672,73,1674,73,1677,84,1683,58,1695,53,1725,51,1738,60,1744,39,1750,19,1757,7,1778,3]],
  [[1894,192,1896,222,1900,214,1905,192,1912,169,1914,126,1916,150,1918,158,1920,110,1923,119,1930,101,1939,74,1945,60,1953,31,1962,15,1972,6,1977,3],
   [1894,139,1896,248,1902,243,1908,184,1914,153,1917,187,1922,162,1927,132,1933,148,1939,98,1947,87,1954,44,1959,19,1968,10,1976,3]],
  [[2099,106,2101,128,2103,110,2106,115,2113,96,2118,83,2122,59,2135,61,2141,65,2149,58,2161,51,2170,38,2180,15,2188,4],
   [2099,80,2101,105,2103,113,2107,94,2115,80,2122,55,2132,53,2147,60,2161,48,2170,37,2180,17,2188,3]],
  [[2334,149,2338,124,2342,101,2351,108,2358,101,2373,85,2384,79,2402,58,2420,47,2427,46,2436,31,2444,26,2450,35,2459,51,2468,74,2476,90,2489,115,2500,101,2508,83,2518,60,2527,51,2535,33,2541,13,2551,7,2587,4,2620,2],
   [2334,132,2337,98,2344,85,2349,96,2353,80,2365,55,2375,67,2384,55,2402,46,2420,30,2432,30,2444,44,2462,55,2468,76,2477,89,2488,107,2497,87,2506,94,2515,67,2527,48,2535,28,2545,9,2563,3]]
];
draw('ed-g', outline(100, 166, 1499, 2, editor, true), outline(2508, 2984, 1499, 2, editor, false));
draw('ed-w', outline(166, 2508, 1499, 2, editor, true));

const h1 = [[713,57,715,61,717,46,719,37,722,28,725,20,737,19,741,14,744,7,747,2],[713,37,715,46,719,37,721,25,724,17,737,16,742,8,747,1]];
const h2 = [[800,34,803,37,806,34,812,38,819,45,826,43,830,30,836,28,842,24,846,15,852,8,861,15,867,22,871,19,875,6,878,2,892,2],
            [800,41,802,53,803,53,804,35,810,33,819,39,827,41,833,36,835,25,843,25,848,15,853,9,861,9,865,17,869,22,873,11,877,2]];
draw('wave-a', outline(650, 976, 647, 1, [[[648,22,652,10,656,3,660,1],[648,22,652,8,656,2]], h1.map(l => fit(l, 713, 712, 1)), h2]));
draw('wave-b', outline(1270, 1986, 647, 1, [
  h1.map(l => fit(l, 713, 1312, 0.9)), h2.map(l => fit(l, 800, 1384, 0.8)),
  [[1733,23,1749,25,1753,14,1755,4,1760,2],[1733,17,1749,18,1753,6,1757,1]],
  [[1798,75,1802,70,1804,54,1807,42,1811,32,1815,20,1819,10,1822,2],[1798,85,1802,83,1804,63,1808,51,1810,48,1813,31,1815,29,1817,17,1820,4]],
  [[1862,43,1865,34,1868,24,1870,19,1879,19,1884,13,1889,3],[1862,36,1865,27,1869,19,1880,18,1885,11,1889,2]],
  [[1934,57,1936,44,1939,36,1947,28,1954,22,1960,14,1969,9,1973,18,1977,28,1982,38,1986,34],[1934,53,1937,39,1941,29,1947,21,1954,15,1962,9,1969,14,1975,19,1979,29,1983,35,1986,29]]
]));
draw('wave-m', outline(1524, 1732, 647, 1, [
  [[1524,73,1528,65,1530,82,1532,65,1534,82,1536,62,1538,85,1542,81,1544,70,1546,56,1548,89,1550,56,1552,57,1554,26,1556,41,1558,24,1562,15,1565,4],
   [1524,45,1528,46,1530,73,1532,49,1534,77,1536,49,1538,77,1540,81,1542,49,1544,63,1548,59,1552,45,1554,29,1556,41,1558,19,1563,11,1566,2]],
  [[1728,45,1732,23],[1728,26,1732,20]]
]));

const ov = [
  [[8,17,11,12,21,10,24,17,27,14,31,11,40,15,42,11,61,10,69,7,80,4,92,1],[8,13,15,10,22,16,27,10,33,15,43,13,48,10,64,8,73,6,80,3,91,1]],
  [[400,13,404,9,409,7,427,4,462,2,475,2,488,3],[400,15,405,10,409,6,427,5,446,2,475,3,486,3]],
  [[590,7,594,13,606,11,622,8,634,4,638,3],[590,7,594,9,612,9,622,7,628,5,638,3]],
  [[766,14,772,15,775,10,784,7,794,4,823,4,834,2],[766,10,773,11,778,6,791,4,823,5,834,1]],
  [[960,7,974,8,993,10,1014,10,1022,8,1047,6,1057,4,1076,2,1099,5,1114,5,1118,1],[960,10,965,12,968,9,1009,10,1019,10,1032,7,1051,6,1063,3,1095,2,1105,6,1111,6,1118,1]],
  [[1508,17,1519,16,1523,21,1526,15,1533,19,1540,20,1548,18,1553,14,1556,21,1560,13,1569,10,1577,5,1585,2],[1508,15,1513,11,1519,13,1523,19,1529,13,1534,18,1542,19,1546,15,1561,10,1574,10,1577,4,1585,1]],
  [[1906,10,1908,5,1952,7,1962,5,1972,3],[1906,7,1908,5,1965,5,1972,2]],
  [[2092,19,2098,16,2106,13,2118,9,2131,5,2146,2],[2092,11,2095,20,2103,19,2107,15,2125,13,2133,8,2146,3]],
  [[2268,11,2272,7,2293,6,2317,5,2336,2],[2268,9,2273,6,2317,4,2336,2]],
  [[2464,13,2469,9,2490,7,2512,6,2531,3,2561,3,2573,5,2595,9,2607,9,2614,6,2632,3,2639,2],[2464,12,2469,6,2480,8,2490,4,2527,4,2561,4,2576,7,2595,9,2618,7,2632,5,2639,2]]
];
draw('ov-g', outline(4, 4000, 1127, 1, ov));
draw('ov-w', outline(634, 2632, 1127, 1, ov));

// Ruler ticks: seconds on the upper lane, bars and beats on the lower one.
let ticks = '';
for (let i = -2; i < 40; i++) {
  const x = Math.round(727 + i * 290.9 / 4), q = ((i % 4) + 4) % 4;
  if (x > 650) ticks += `M${x} 215V${[246, 216, 222, 222][q]}`;
}
for (let i = -15; i < 200; i++) {
  const x = Math.round(909 + i * 545.5 / 32);
  if (i % 32 === 0) ticks += `M${x} ${i ? 258 : 290}V328`;
  else ticks += `M${x} ${i % 8 === 0 ? 300 : 312}V328`;
}
document.getElementById('ruler').innerHTML = `<path d="${ticks}"/>`;
let lines = '';
for (let i = -1; i < 40; i++) lines += `M${Math.round(909 + i * 136.37)} 466V946`;
document.getElementById('grid').innerHTML = `<path d="${lines}"/>`;
```
